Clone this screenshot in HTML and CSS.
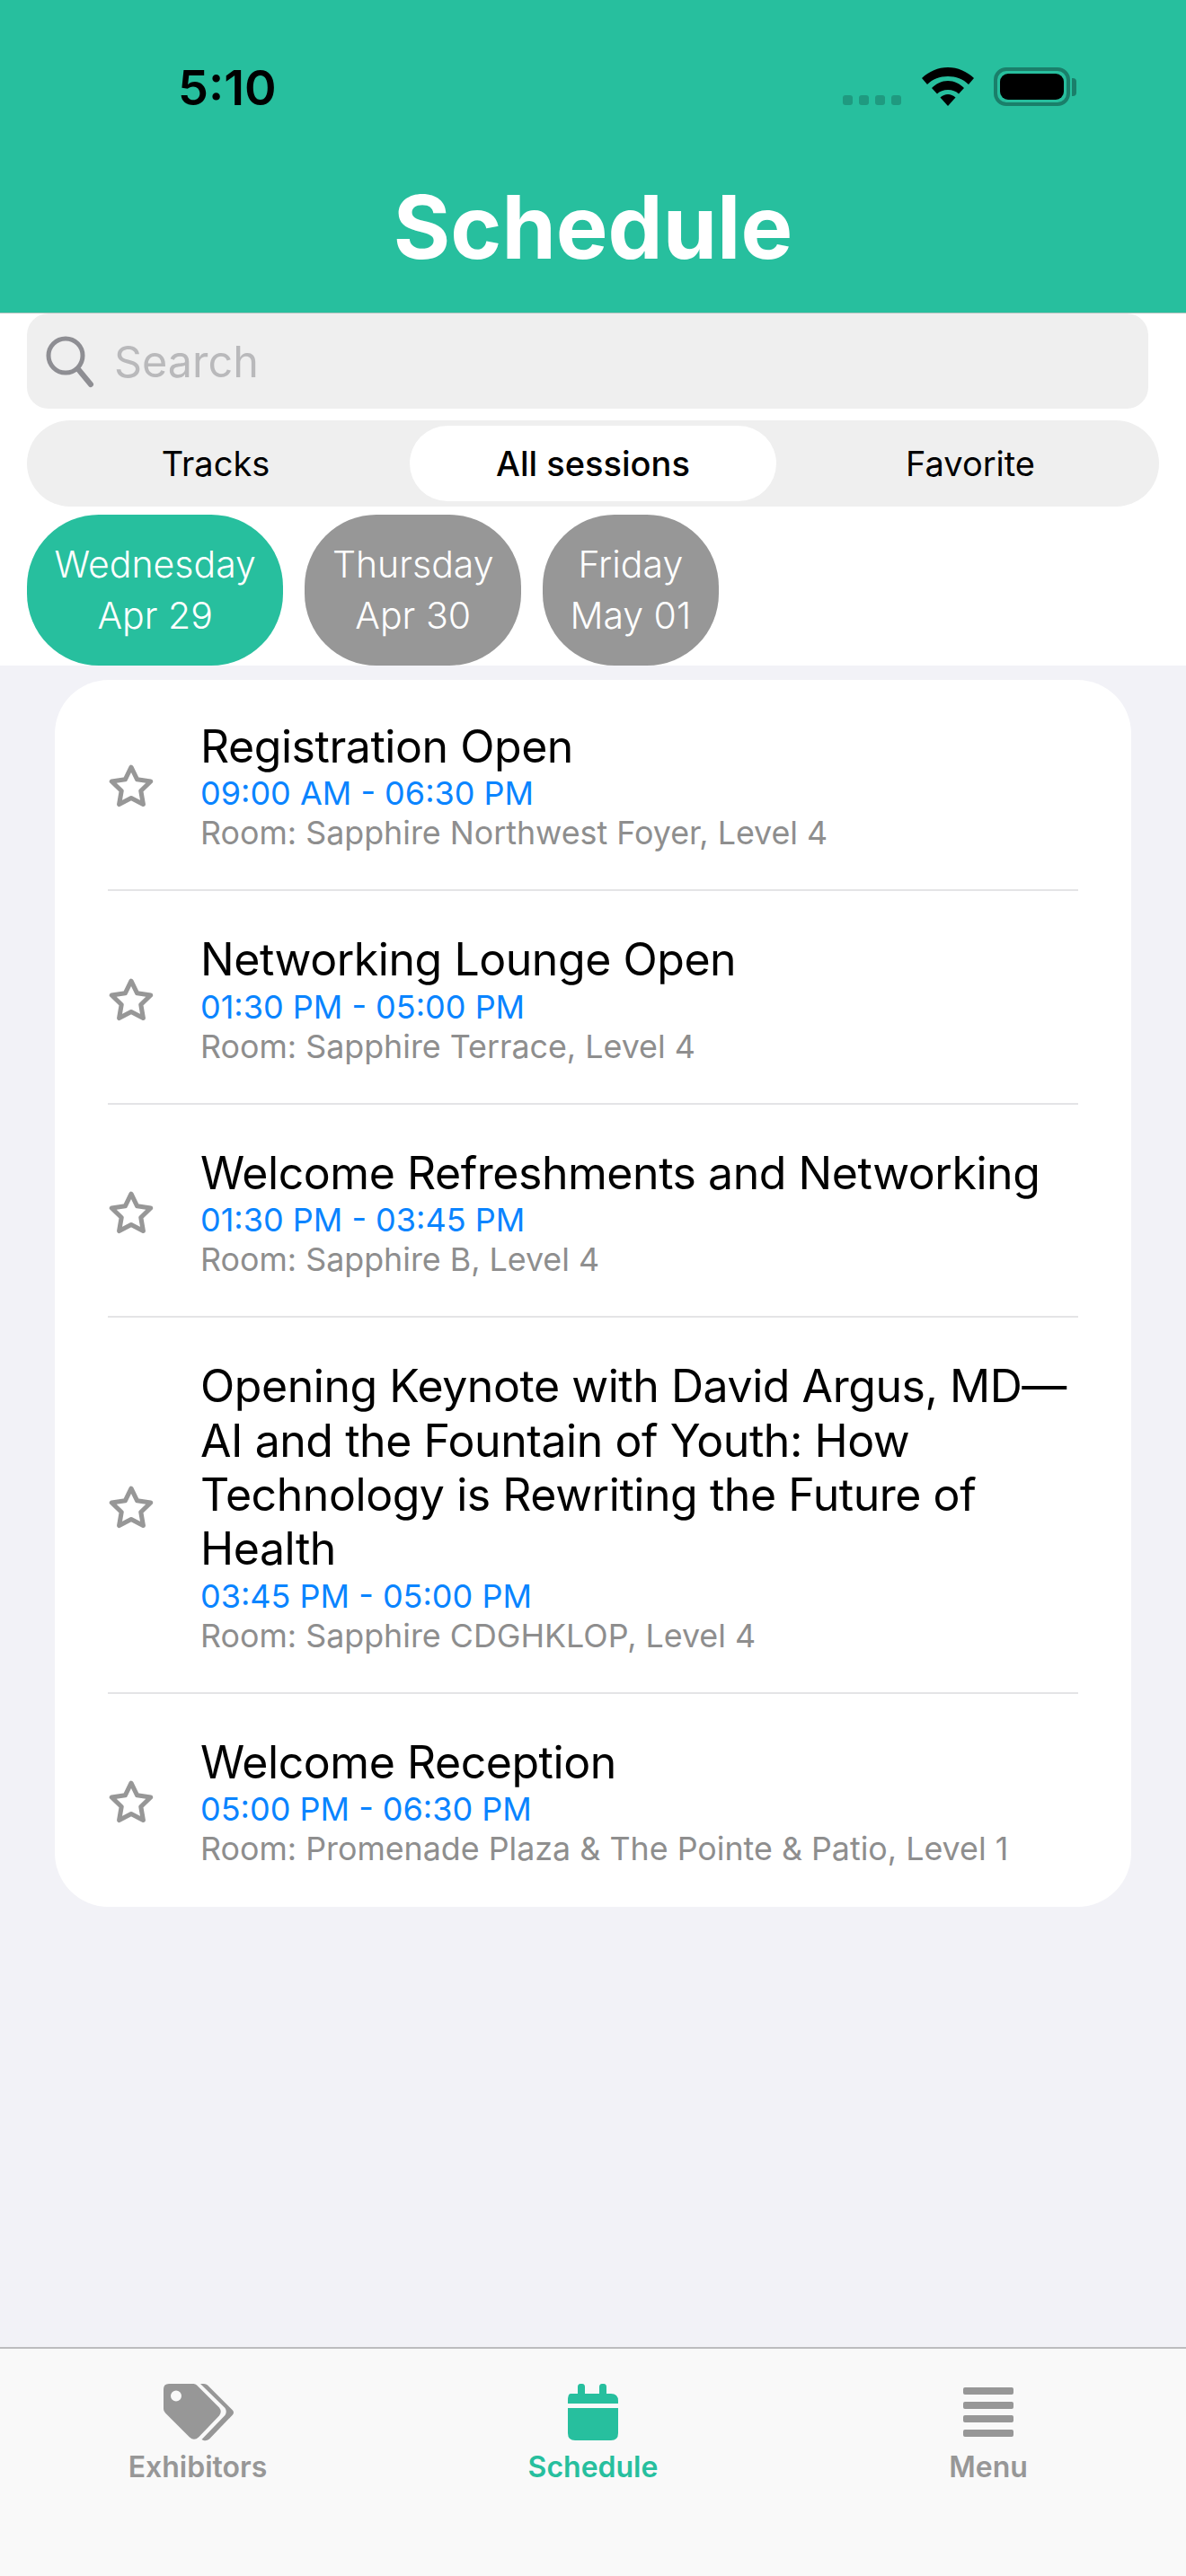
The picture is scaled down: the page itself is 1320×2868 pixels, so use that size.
FILE: index.html
```html
<!DOCTYPE html>
<html lang="en">
<head>
<meta charset="utf-8">
<title>Schedule</title>
<link rel="stylesheet" href="styles.css">
</head>
<body>
<svg class="defs" width="0" height="0" aria-hidden="true">
  <symbol id="star" viewBox="0 0 56 52"><path d="M28 3.500 35.200 18.200 51.500 20.600 39.700 32 42.500 48.200 28 40.600 13.500 48.200 16.300 32 4.500 20.600 20.800 18.200Z" fill="none" stroke="#979797" stroke-width="5.500" stroke-linejoin="round"/></symbol>
</svg>
<div class="app">
  <header class="header">
    <div class="status">
      <span class="time">5:10</span>
      <div class="status-icons">
        <div class="dots"><i></i><i></i><i></i><i></i></div>
        <svg class="wifi" viewBox="0 0 58 43"><path d="M29 0C40 0 50 4.500 58 12L52 19C46 13 38 10 29 10 20 10 12 13 6 19L0 12C8 4.500 18 0 29 0Z"/><path d="M29 15C36 15 42 18 47 23L41 29.500C38 26.500 34 25 29 25 24 25 20 26.500 17 29.500L11 23C16 18 22 15 29 15Z"/><path d="M29 30C32 30 35 31.200 37.500 33.500L29 43 20.500 33.500C23 31.200 26 30 29 30Z"/></svg>
        <div class="battery"><div class="battery-body"><div class="battery-fill"></div></div><div class="battery-cap"></div></div>
      </div>
    </div>
    <h1 class="title">Schedule</h1>
  </header>

  <section class="filters">
    <div class="search">
      <svg class="search-icon" viewBox="0 0 56 60"><circle cx="24" cy="24" r="19" fill="none" stroke="#8e8e93" stroke-width="5"/><path d="M38 39 52 56" stroke="#8e8e93" stroke-width="6" stroke-linecap="round"/></svg>
      <span class="search-text">Search</span>
    </div>
    <div class="segment">
      <div class="seg-item">Tracks</div>
      <div class="seg-item seg-active">All sessions</div>
      <div class="seg-item">Favorite</div>
    </div>
    <div class="days">
      <div class="day day-active"><span>Wednesday</span><span>Apr 29</span></div>
      <div class="day"><span>Thursday</span><span>Apr 30</span></div>
      <div class="day"><span>Friday</span><span>May 01</span></div>
    </div>
  </section>

  <main class="content">
    <div class="card">
      <article class="row">
        <svg class="star"><use href="#star"/></svg>
        <div class="info"><h2 class="name">Registration Open</h2><p class="when">09:00 AM - 06:30 PM</p><p class="room">Room: Sapphire Northwest Foyer, Level 4</p></div>
      </article>
      <article class="row">
        <svg class="star"><use href="#star"/></svg>
        <div class="info"><h2 class="name">Networking Lounge Open</h2><p class="when">01:30 PM - 05:00 PM</p><p class="room">Room: Sapphire Terrace, Level 4</p></div>
      </article>
      <article class="row">
        <svg class="star"><use href="#star"/></svg>
        <div class="info"><h2 class="name">Welcome Refreshments and Networking</h2><p class="when">01:30 PM - 03:45 PM</p><p class="room">Room: Sapphire B, Level 4</p></div>
      </article>
      <article class="row">
        <svg class="star"><use href="#star"/></svg>
        <div class="info"><h2 class="name">Opening Keynote with David Argus, MD—<br>AI and the Fountain of Youth: How<br>Technology is Rewriting the Future of<br>Health</h2><p class="when">03:45 PM - 05:00 PM</p><p class="room">Room: Sapphire CDGHKLOP, Level 4</p></div>
      </article>
      <article class="row">
        <svg class="star"><use href="#star"/></svg>
        <div class="info"><h2 class="name">Welcome Reception</h2><p class="when">05:00 PM - 06:30 PM</p><p class="room">Room: Promenade Plaza &amp; The Pointe &amp; Patio, Level 1</p></div>
      </article>
    </div>
  </main>

  <nav class="tabbar">
    <div class="tab">
      <svg class="tab-icon tab-icon-tag" viewBox="0 0 90 70"><path fill="#979797" fill-rule="evenodd" d="M9 3H36.500Q38.500 3 40 4.500L65 29.500Q68.500 34 65 38.500L42 62.500Q37 67 32 62.500L5 35.500Q3 33.500 3 31V9Q3 3 9 3ZM17 10.500A6 6 0 1 0 17 22.500 6 6 0 1 0 17 10.500Z"/><path fill="#979797" d="M44 3H48Q50.500 3 52 4.500L80 32.500Q82 35 80 37.500L54 64.500Q51 67 47.500 66L45.500 65 71.500 38Q74 34 71.500 30Z"/></svg>
      <span class="tab-label">Exhibitors</span>
    </div>
    <div class="tab tab-active">
      <svg class="tab-icon" viewBox="0 0 90 70"><path fill="#27bf9e" d="M20 14H28V6.500Q28 3 31 3H33Q36 3 36 6.500V14H52V6.500Q52 3 55 3H57Q60 3 60 6.500V14H65Q73 14 73 22V25H17V22Q17 14 20 14Z M17 30H73V58Q73 66 65 66H25Q17 66 17 58Z"/></svg>
      <span class="tab-label">Schedule</span>
    </div>
    <div class="tab">
      <svg class="tab-icon" viewBox="0 0 90 70"><g fill="#979797"><rect x="17" y="7" width="56" height="8" rx="2"/><rect x="17" y="23" width="56" height="8" rx="2"/><rect x="17" y="38" width="56" height="8" rx="2"/><rect x="17" y="54" width="56" height="8" rx="2"/></g></svg>
      <span class="tab-label">Menu</span>
    </div>
  </nav>
</div>
</body>
</html>
```
FILE: styles.css
```css
* { box-sizing: border-box; }
html, body { margin: 0; padding: 0; }
body { font-family: Inter, "Liberation Sans", sans-serif; }
.defs { display: block; height: 0; }
.app { width: 1320px; height: 2868px; display: flex; flex-direction: column; background: #f2f2f7; }

.header { height: 349px; background: #27bf9e; border-bottom: 1px solid #b5c4c0; flex: none; }
.status { height: 190px; display: flex; justify-content: space-between; padding: 75px 122px 0 198px; }
.time { font-size: 54px; font-weight: 600; line-height: 46px; color: #000; }
.status-icons { display: flex; align-items: flex-start; height: 43px; }
.dots { display: flex; gap: 7px; margin-top: 31px; margin-right: 23px; }
.dots i { display: block; width: 11px; height: 11px; border-radius: 3px; background: #1f9a80; }
.wifi { width: 58px; height: 43px; fill: #000; margin-right: 22px; }
.battery { display: flex; align-items: center; }
.battery-body { width: 85px; height: 43px; border: 4px solid #1a7f6a; border-radius: 14px; padding: 3px; }
.battery-fill { width: 100%; height: 100%; background: #000; border-radius: 9px; }
.battery-cap { width: 5px; height: 20px; background: #1a7f6a; border-radius: 0 4px 4px 0; margin-left: 2px; }
.title { margin: 0; text-align: center; color: #fff; font-size: 97px; font-weight: 700; line-height: 126px; }

.filters { background: #fff; height: 392px; padding: 0 30px; flex: none; display: flex; flex-direction: column; }
.search { width: 1248px; height: 106px; background: #efefef; border-radius: 24px; display: flex; align-items: center; padding: 0 0 0 19px; }
.search-icon { width: 56px; height: 60px; margin-right: 22px; }
.search-text { font-size: 48.500px; color: #b9b9bb; }
.segment { margin-top: 13px; height: 96px; background: #efefef; border-radius: 48px; display: grid; grid-template-columns: repeat(3, 1fr); padding: 6px 0; }
.seg-item { font-size: 38px; font-weight: 400; display: flex; align-items: center; justify-content: center; color: #000; border-radius: 42px; margin: 0 6px; }
.seg-active { background: #fff; font-weight: 500; }
.days { display: flex; gap: 24px; margin-top: 9px; }
.day { height: 168px; padding: 0 30.500px; border-radius: 80px; background: #979797; color: #fff; display: flex; flex-direction: column; align-items: center; justify-content: center; font-size: 41px; font-weight: 300; line-height: 57px; }
.day-active { background: #27bf9e; }

.content { flex: 1; padding: 16px 61px 0; }
.card { background: #fff; border-radius: 60px; padding: 0 59px; }
.row { display: flex; align-items: center; border-bottom: 2px solid #e4e4e6; padding: 46px 0 41px; }
.row:first-child { padding-top: 44px; }
.row:last-child { border-bottom: 0; padding-bottom: 43px; }
.star { width: 52px; height: 48px; flex: none; margin-right: 51px; }
.info { min-width: 0; }
.name { margin: 0; font-size: 50px; font-weight: 440; letter-spacing: -0.45px; line-height: 60.4px; color: #000; white-space: nowrap; }
.when { margin: 0; font-size: 36px; line-height: 44px; color: #0a84ff; }
.room { margin: 0; font-size: 35.800px; line-height: 44px; color: #8e8e8e; }

.tabbar { height: 255px; flex: none; background: #f9f9f9; border-top: 2px solid #bdbdbf; display: grid; grid-template-columns: repeat(3, 1fr); }
.tab { display: flex; flex-direction: column; align-items: center; padding-top: 36px; }
.tab-icon { width: 90px; height: 70px; }
.tab-icon-tag { margin-left: 7px; }
.tab-label { font-size: 32px; font-weight: 600; color: #979797; line-height: 38px; margin-top: 7px; }
.tab-active .tab-label { color: #27bf9e; }
```
